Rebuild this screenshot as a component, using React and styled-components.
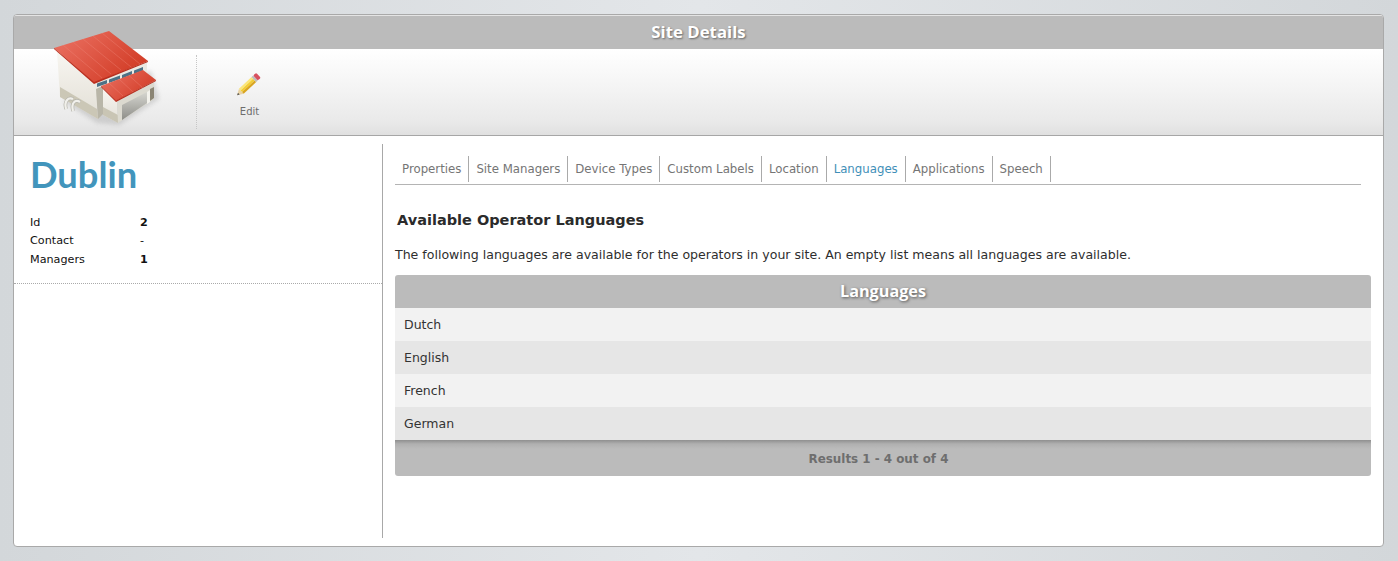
import React from "react";
import styled, { createGlobalStyle } from "styled-components";

const GlobalStyle = createGlobalStyle`
  html, body { margin: 0; padding: 0; }
  body {
    height: 561px;
    overflow: hidden;
    background: linear-gradient(90deg, #d3d7da 0%, #e3e6e9 50%, #d3d7da 100%);
    font-family: "DejaVu Sans", Verdana, sans-serif;
  }
`;

const Page = styled.div`
  padding: 14px 14px 14px 13px;
  height: 533px;
`;

const Panel = styled.div`
  position: relative;
  height: 531px;
  border: 1px solid #a9a9a9;
  border-radius: 4px;
  background: #fff;
  overflow: hidden;
`;

const TitleBar = styled.div`
  height: 34px;
  background: #bbbbbb;
  box-shadow: inset 0 1px 0 #e4e4e4;
  color: #fff;
  font-family: "Open Sans", sans-serif;
  font-weight: 700;
  font-size: 16.8px;
  line-height: 34px;
  text-align: center;
  text-shadow: 1px 1px 2px rgba(0, 0, 0, 0.45);
`;

const Toolbar = styled.div`
  height: 86px;
  display: flex;
  align-items: center;
  background: linear-gradient(#ffffff 0%, #f4f4f4 45%, #e9e9e9 85%, #e0e0e0 100%);
  border-bottom: 1px solid #a6a6a6;
`;

const LogoCell = styled.div`
  width: 182px;
  height: 74px;
  flex: none;
`;

const Logo = styled.svg`
  position: absolute;
  left: 37px;
  top: 14px;
`;

const ToolButton = styled.div`
  width: 106px;
  height: 74px;
  border-left: 1px dotted #c6c6c6;
  display: flex;
  flex-direction: column;
  align-items: center;
  padding-top: 15px;
  box-sizing: border-box;
  color: #6d6d6d;
  font-size: 10px;
`;

const PencilSvg = styled.svg`
  margin-right: 4px;
`;

const ToolLabel = styled.span`
  margin-top: 6px;
`;

const Body = styled.div`
  display: flex;
  height: 394px;
  margin-top: 8px;
`;

const Sidebar = styled.div`
  width: 368px;
  height: 394px;
  flex: none;
  border-right: 1px solid #a8a8a8;
`;

const SiteInfo = styled.div`
  height: 140px;
  box-sizing: border-box;
  padding: 9px 0 0 16px;
  border-bottom: 1px dotted #aaa;
`;

const SiteName = styled.h1`
  margin: 0 0 18px;
  font-family: Lato, sans-serif;
  font-weight: 700;
  font-size: 36.3px;
  line-height: 43px;
  color: #4295bc;
`;

const InfoRow = styled.div`
  display: flex;
  height: 18.4px;
  font-size: 11.2px;
  line-height: 18px;
  color: #111;
`;

const InfoLabel = styled.span`
  width: 110px;
`;

const InfoValue = styled.span`
  font-weight: ${(p) => (p.$plain ? 400 : 700)};
`;

const Content = styled.div`
  flex: 1;
  padding: 12px 12px 0;
`;

const TabBar = styled.div`
  display: flex;
  width: 966px;
  height: 28px;
  border-bottom: 1px solid #b4b4b4;
`;

const Tab = styled.div`
  height: 26px;
  padding: 0 7px;
  border-right: 1px solid #aaa;
  font-size: 11.76px;
  line-height: 26px;
  color: ${(p) => (p.$active ? "#3f8fb8" : "#757575")};
  white-space: nowrap;
`;

const Heading = styled.h2`
  margin: 25px 0 0 2px;
  font-size: 14.5px;
  line-height: 20px;
  font-weight: 700;
  color: #2b2b2b;
`;

const Intro = styled.p`
  margin: 15px 0 0;
  font-size: 12.55px;
  line-height: 20px;
  color: #2e2e2e;
`;

const Grid = styled.div`
  width: 976px;
  margin-top: 10px;
  border-radius: 3px;
  overflow: hidden;
`;

const GridHead = styled.div`
  height: 33px;
  background: #bbbbbb;
  color: #fff;
  font-family: "Open Sans", sans-serif;
  font-weight: 700;
  font-size: 16.2px;
  line-height: 33px;
  text-align: center;
  text-shadow: 1px 1px 3px rgba(0, 0, 0, 0.55);
`;

const GridRow = styled.div`
  height: 33px;
  padding-left: 9px;
  background: ${(p) => (p.$alt ? "#e6e6e6" : "#f2f2f2")};
  font-size: 12.5px;
  line-height: 34px;
  color: #333;
`;

const GridFoot = styled.div`
  height: 36px;
  padding-right: 9px;
  background: linear-gradient(#8f8f8f 0, #b0b0b0 4px, #bbbbbb 9px);
  font-size: 11.9px;
  font-weight: 700;
  line-height: 38px;
  text-align: center;
  color: #6e6e6e;
`;

const BuildingIcon = () => (
  <Logo width="115" height="100" viewBox="50 28 115 100">
    <defs>
      <linearGradient id="roof" x1="0" y1="0" x2="1" y2="0.6">
        <stop offset="0" stopColor="#ec7466" />
        <stop offset="1" stopColor="#d23c26" />
      </linearGradient>
      <linearGradient id="wall" x1="0" y1="0" x2="0" y2="1">
        <stop offset="0" stopColor="#f8f6f1" />
        <stop offset="1" stopColor="#e2dfd6" />
      </linearGradient>
      <linearGradient id="door" x1="0" y1="0" x2="0" y2="1">
        <stop offset="0" stopColor="#d6d6d0" />
        <stop offset="1" stopColor="#8d8d88" />
      </linearGradient>
      <filter id="soft">
        <feGaussianBlur stdDeviation="2" />
      </filter>
    </defs>
    <path d="M62 100 L96 122 L118 124 L158 98 L150 70 Z" fill="#999" opacity="0.35" filter="url(#soft)" />
    <path d="M56 50 L95 82 L97 118 L59 96 Z" fill="url(#wall)" />
    <path d="M59 86 L96 108 L97 118 L59 96 Z" fill="#cbc7b6" />
    <path d="M93 82 L146 60 L146 72 L94 92 Z" fill="#ebe9e2" />
    <path d="M96 82.5 L106 79 L106 82.5 L96 86 Z M108 78.5 L119 74.5 L119 78 L108 82 Z M121 74 L131 70 L131 73.5 L121 77.5 Z M133 69.5 L142 66 L142 69.5 L133 73 Z" fill="#4d7186" />
    <path d="M95 88 L102 85 L102 113 L97 118 Z" fill="#b9b6a8" />
    <path d="M102 88 L116 101 L117 122 L102 114 Z" fill="url(#wall)" />
    <path d="M102 106 L117 114 L117 122 L102 114 Z" fill="#c9c5b4" />
    <path d="M116 100 L153 81 L153 98 L117 122 Z" fill="#dcdad0" />
    <path d="M121 104 L146 91 L146 102 L121 119 Z" fill="url(#door)" />
    <path d="M146 91 L149 89 L149 101 L146 103 Z" fill="#f3f2ec" />
    <path d="M149 88 L153 86 L153 97 L149 100 Z" fill="#8b8574" />
    <path d="M53 47 L108 30 L147 60 L93 82 Z" fill="url(#roof)" />
    <path d="M53 47 L93 81 L147 60 L147 61 L93 83 L53 48 Z" fill="#b92f1f" />
    <path d="M62 44 L101 77 M72 41 L110 73 M82 38 L120 69 M92 35 L130 66 M101 32 L139 63" stroke="#f08a7c" strokeWidth="0.6" opacity="0.6" />
    <path d="M100 85 L142 69 L155 79 L115 100 Z" fill="url(#roof)" />
    <path d="M100 85 L115 99.5 L155 79 L155 80 L115 101 L100 86 Z" fill="#b92f1f" />
    <path d="M108 82 L122 95 M118 78 L132 91 M128 74.5 L142 87" stroke="#f08a7c" strokeWidth="0.6" opacity="0.6" />
    <path d="M65 108 C63 100 67 96 72 98 M72 110 C70 102 74 98 79 101" fill="none" stroke="#b5b4ac" strokeWidth="3.6" />
    <path d="M65 108 C63 100 67 96 72 98 M72 110 C70 102 74 98 79 101" fill="none" stroke="#f1f0eb" strokeWidth="2.2" />
  </Logo>
);

const PencilIcon = () => (
  <PencilSvg width="32" height="30" viewBox="0 0 28 26">
    <g transform="rotate(-43 14 13)">
      <path d="M1 13 L6 10 L6 16 Z" fill="#e9d3a5" />
      <path d="M1 13 L3 11.9 L3 14.1 Z" fill="#555" />
      <rect x="6" y="10" width="15" height="2" fill="#fbe67a" />
      <rect x="6" y="12" width="15" height="2" fill="#f3cd33" />
      <rect x="6" y="14" width="15" height="2" fill="#d9a520" />
      <rect x="21" y="10" width="2" height="6" fill="#bdbdbd" />
      <rect x="23" y="10" width="3.5" height="6" rx="1.2" fill="#d8505f" />
    </g>
  </PencilSvg>
);

const tabs = ["Properties", "Site Managers", "Device Types", "Custom Labels", "Location", "Languages", "Applications", "Speech"];
const languages = ["Dutch", "English", "French", "German"];

export default function App() {
  return (
    <Page>
      <GlobalStyle />
      <Panel>
        <TitleBar>Site Details</TitleBar>
        <Toolbar>
          <LogoCell />
          <BuildingIcon />
          <ToolButton>
            <PencilIcon />
            <ToolLabel>Edit</ToolLabel>
          </ToolButton>
        </Toolbar>
        <Body>
          <Sidebar>
            <SiteInfo>
              <SiteName>Dublin</SiteName>
              <InfoRow><InfoLabel>Id</InfoLabel><InfoValue>2</InfoValue></InfoRow>
              <InfoRow><InfoLabel>Contact</InfoLabel><InfoValue $plain>-</InfoValue></InfoRow>
              <InfoRow><InfoLabel>Managers</InfoLabel><InfoValue>1</InfoValue></InfoRow>
            </SiteInfo>
          </Sidebar>
          <Content>
            <TabBar>
              {tabs.map((t) => (
                <Tab key={t} $active={t === "Languages"}>{t}</Tab>
              ))}
            </TabBar>
            <Heading>Available Operator Languages</Heading>
            <Intro>The following languages are available for the operators in your site. An empty list means all languages are available.</Intro>
            <Grid>
              <GridHead>Languages</GridHead>
              {languages.map((l, i) => (
                <GridRow key={l} $alt={i % 2 === 1}>{l}</GridRow>
              ))}
              <GridFoot>Results 1 - 4 out of 4</GridFoot>
            </Grid>
          </Content>
        </Body>
      </Panel>
    </Page>
  );
}
